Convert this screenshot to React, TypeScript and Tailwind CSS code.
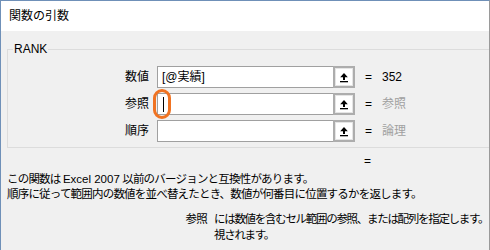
import React from "react";

const font = { fontFamily: '"Liberation Sans", "Noto Sans CJK JP", sans-serif' };

function RefButton() {
  return (
    <div className="w-[22px] h-[22px] shrink-0 border-2 border-[#adadad] bg-[#e5e5e5] flex items-center justify-center">
      <div className="w-[16px] h-[16px] bg-white flex items-center justify-center">
        <svg width="10" height="11" viewBox="0 0 10 11">
          <path d="M5 1 L8.8 5.2 L1.2 5.2 Z" fill="#000" />
          <rect x="4" y="5" width="2" height="3" fill="#000" />
          <rect x="1" y="9" width="8" height="1.3" fill="#000" />
        </svg>
      </div>
    </div>
  );
}

function ArgRow({ label, value, result, resultGray, children }: {
  label: string;
  value?: string;
  result: string;
  resultGray?: boolean;
  children?: React.ReactNode;
}) {
  return (
    <div className="flex items-center h-[22px]">
      <div className="w-[142px] shrink-0 text-right text-[12px] text-black pr-[1px]">{label}</div>
      <div className="ml-[7px] flex">
        <div className="relative w-[176px] h-[22px] bg-white border border-[#a0a0a0] border-r-0 flex items-center pl-[4px] text-[12px] text-black">
          {value}
          {children}
        </div>
        <RefButton />
      </div>
      <div className="ml-[10px] text-[12px] text-black">=</div>
      <div className={`ml-[10px] text-[12px] ${resultGray ? "text-[#a0a0a0]" : "text-black"}`}>{result}</div>
    </div>
  );
}

export default function App() {
  return (
    <div style={font} className="w-[490px] h-[250px] overflow-hidden flex flex-col border-t border-l border-[#6f90b8] border-r border-r-[#9a9a9a] bg-[#f0f0f0]">
      {/* タイトルバー */}
      <div className="h-[30px] shrink-0 bg-white flex items-center pl-[8px] text-[12px] text-black">
        関数の引数
      </div>

      {/* 本体 */}
      <div className="flex-1 pl-[6px] overflow-hidden">
        <fieldset className="mt-[9px] w-[540px] border border-[#dcdcdc] pb-[5px] pt-[8px]">
          <legend className="ml-[5px] px-[1px] text-[12px] text-black">RANK</legend>
          <div className="flex flex-col gap-[5px]">
            <ArgRow label="数値" value="[@実績]" result="352" />
            <ArgRow label="参照" result="参照" resultGray>
              <div className="w-px h-[15px] bg-black ml-[1px]" />
              <div className="absolute left-[-5px] top-[-5px] w-[18px] h-[30px] rounded-full border-[3px] border-[#f07322]" />
            </ArgRow>
            <ArgRow label="順序" result="論理" resultGray />
          </div>
        </fieldset>

        <div className="pl-[357px] mt-[6px] text-[12px] text-black leading-[14px]">=</div>

        <div className="mt-[4px] text-[11.5px] tracking-[-0.8px] leading-[15px] text-black whitespace-nowrap">
          <p>この関数は <span className="tracking-normal">Excel 2007</span> 以前のバージョンと互換性があります。</p>
          <p>順序に従って範囲内の数値を並べ替えたとき、数値が何番目に位置するかを返します。</p>
        </div>

        <div className="mt-[9px] flex text-[11.5px] leading-[16px] text-black whitespace-nowrap">
          <div className="w-[200px] shrink-0 text-right tracking-[-0.8px]">参照</div>
          <div className="ml-[7px] tracking-[-1.3px]">
            <p>には数値を含むセル範囲の参照、または配列を指定します。</p>
            <p>視されます。</p>
          </div>
        </div>
      </div>
    </div>
  );
}
